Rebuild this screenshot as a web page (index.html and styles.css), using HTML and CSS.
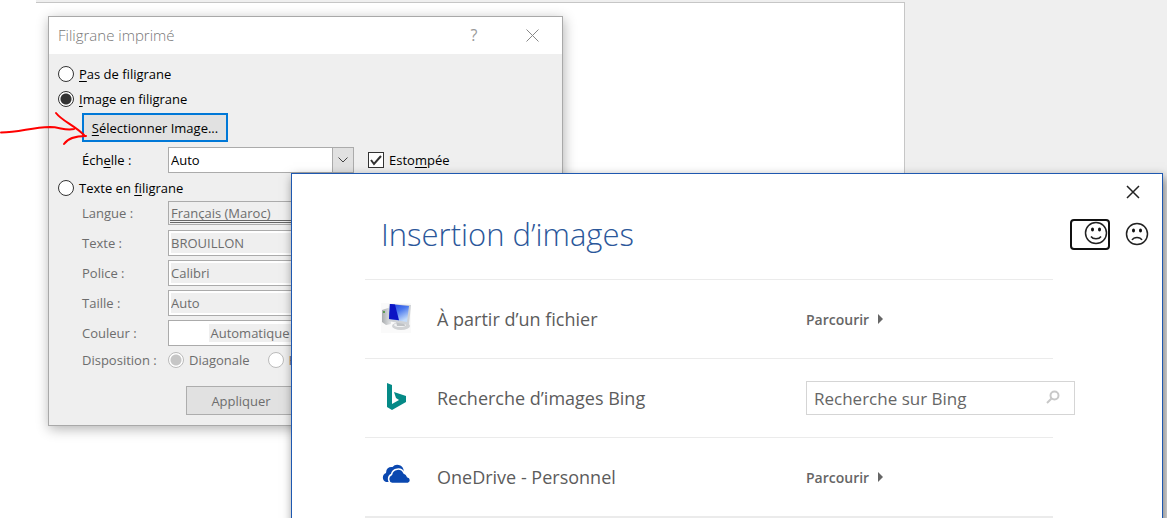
FILE: index.html
```html
<!DOCTYPE html>
<html lang="fr">

<head>
    <meta charset="utf-8">
    <title>Filigrane</title>
    <meta name="viewport" content="width=device-width, initial-scale=1">
    <link rel="stylesheet" href="styles.css">
</head>

<body>
    <div class="desktop">
        <div class="workspace">
            <div class="page"></div>
        </div>

        <div class="window watermark">
            <div class="titlebar">
                <span class="titlebar-text">Filigrane imprimé</span>
                <button type="button" class="titlebar-btn" aria-label="Aide">?</button>
                <button type="button" class="titlebar-btn" aria-label="Fermer">
                    <svg width="13" height="13" viewBox="0 0 13 13"><path d="M.5.5l12 12M12.5.5l-12 12"/></svg>
                </button>
            </div>

            <form class="watermark-form">
                <label class="choice"><input type="radio" name="type"><span><u>P</u>as de filigrane</span></label>
                <label class="choice"><input type="radio" name="type" checked><span><u>I</u>mage en filigrane</span></label>

                <button type="button" class="btn btn-focus"><span><u>S</u>électionner Image...</span></button>

                <div class="field">
                    <label for="scale">Éch<u>e</u>lle :</label>
                    <div class="combo">
                        <select id="scale"><option>Auto</option></select>
                        <svg class="combo-arrow" width="20" height="24" viewBox="0 0 20 24"><path d="M5.500 9.500l4.500 4.500 4.500-4.500"/></svg>
                    </div>
                    <label class="choice"><input type="checkbox" checked><span>Esto<u>m</u>pée</span></label>
                </div>

                <label class="choice choice-text"><input type="radio" name="type"><span>Texte en <u>f</u>iligrane</span></label>

                <fieldset class="text-options" disabled>
                    <div class="field">
                        <label for="lang">Langue :</label>
                        <select id="lang" class="lang"><option>Français (Maroc)</option></select>
                    </div>
                    <div class="field">
                        <label for="text">Texte :</label>
                        <select id="text"><option>BROUILLON</option></select>
                    </div>
                    <div class="field">
                        <label for="police">Police :</label>
                        <select id="police"><option>Calibri</option></select>
                    </div>
                    <div class="field">
                        <label for="size">Taille :</label>
                        <select id="size"><option>Auto</option></select>
                    </div>
                    <div class="field">
                        <label for="color">Couleur :</label>
                        <button type="button" id="color" class="color"><span>Automatique</span></button>
                    </div>
                    <div class="field layout">
                        <span class="field-name">Disposition :</span>
                        <label class="choice"><input type="radio" name="layout" checked><span>Diagonale</span></label>
                        <label class="choice"><input type="radio" name="layout"><span>Horizontale</span></label>
                    </div>
                </fieldset>

                <div class="buttons">
                    <button type="button" class="btn" disabled>Appliquer</button>
                </div>
            </form>
        </div>

        <!-- hand drawn arrow -->
        <svg class="arrow" width="90" height="40" viewBox="0 0 90 40">
            <path d="M1 22.500C20 22.500 30 17.500 50 17C60 17 65 21 74 19M56 3C62 11 74 15 84 25M86 26C78 26 68 28 64 34"/>
        </svg>

        <div class="window insert">
            <div class="insert-top">
                <button type="button" class="close" aria-label="Fermer">
                    <svg width="14" height="14" viewBox="0 0 14 14"><path d="M1 1l12 12M13 1L1 13"/></svg>
                </button>
            </div>

            <div class="insert-head">
                <h1>Insertion d’images</h1>
                <button type="button" class="smiley smiley-focus" aria-label="J’aime">
                    <svg width="24" height="24" viewBox="0 0 24 24">
                        <circle cx="12" cy="12" r="10.500"/>
                        <path d="M7 15.500C9 18.500 15 18.500 17 15.500"/>
                        <ellipse class="eye" cx="8.500" cy="8.500" rx="1.500" ry="2"/>
                        <ellipse class="eye" cx="15.500" cy="8.500" rx="1.500" ry="2"/>
                    </svg>
                </button>
                <button type="button" class="smiley" aria-label="Je n’aime pas">
                    <svg width="24" height="24" viewBox="0 0 24 24">
                        <circle cx="12" cy="12" r="10.500"/>
                        <path d="M7 18C9 14.500 15 14.500 17 18"/>
                        <ellipse class="eye" cx="8.500" cy="8.500" rx="1.500" ry="2"/>
                        <ellipse class="eye" cx="15.500" cy="8.500" rx="1.500" ry="2"/>
                    </svg>
                </button>
            </div>

            <ul class="sources">
                <li class="source">
                    <svg class="icon" width="30" height="30" viewBox="0 0 30 30">
                        <defs>
                            <linearGradient id="screen" x1="0" y1="0" x2="0.600" y2="1">
                                <stop offset="0" stop-color="#1a38e0"/>
                                <stop offset="0.500" stop-color="#4a78ee"/>
                                <stop offset="1" stop-color="#c4dcfa"/>
                            </linearGradient>
                            <linearGradient id="tower" x1="0" y1="0" x2="1" y2="0">
                                <stop offset="0" stop-color="#a9acae"/>
                                <stop offset="1" stop-color="#e4e6e8"/>
                            </linearGradient>
                        </defs>
                        <rect width="30" height="30" fill="#fafafa"/>
                        <path fill="url(#tower)" d="M1 7l6-2 3 1v15l-5 1-4-3z"/>
                        <path fill="#5d9a52" d="M2 8h2v2H2z"/>
                        <ellipse cx="20" cy="23" rx="9" ry="4" fill="#d0d2d4"/>
                        <ellipse cx="19" cy="22" rx="6" ry="2" fill="#f1f2f3"/>
                        <path fill="#bfc2c5" d="M15 18l8 1 1 4h-8z"/>
                        <path fill="#cfd2d6" d="M8 1l22 1-2 20-21-4z"/>
                        <path fill="url(#screen)" d="M9 1l19 2-2 16-18-3z"/>
                        <path fill="#0b14c4" d="M9 1l5 .5 4 15.800-10-1.300z"/>
                    </svg>
                    <span class="source-name">À partir d’un fichier</span>
                    <a href="#" class="browse">Parcourir</a>
                </li>
                <li class="source">
                    <svg class="icon" width="30" height="30" viewBox="0 0 30 30">
                        <path fill="#058a87" d="M6 1l5 2v19l7-4-3-2-2-6 12 4v6l-14 8-5-3z"/>
                    </svg>
                    <label for="bing" class="source-name">Recherche d’images Bing</label>
                    <div class="search">
                        <input type="text" id="bing" placeholder="Recherche sur Bing">
                        <button type="button" aria-label="Rechercher">
                            <svg width="14" height="14" viewBox="0 0 14 14"><circle cx="8.500" cy="5.500" r="4"/><path d="M5.500 8.500L1 13"/></svg>
                        </button>
                    </div>
                </li>
                <li class="source">
                    <svg class="icon" width="30" height="30" viewBox="0 0 30 30">
                        <path fill="#0b48b0" d="M5 21a4.800 4.800 0 0 1 0-9 5.500 5.500 0 0 1 6.500-6 6.500 6.500 0 0 1 11 2.500V14H10v7z"/>
                        <path fill="#0b48b0" stroke="#fff" stroke-width="1.500" d="M11 22.500a4.800 4.800 0 0 1-.5-9 6.600 6.600 0 0 1 12.500-1.500 5 5 0 0 1 3.500 3.700 3.500 3.500 0 0 1 .5 6.800z"/>
                    </svg>
                    <span class="source-name">OneDrive - Personnel</span>
                    <a href="#" class="browse">Parcourir</a>
                </li>
            </ul>
        </div>
    </div>
</body>

</html>
```
FILE: styles.css
```css
* {
    box-sizing: border-box;
}

body {
    margin: 0;
    font-family: "Open Sans", "Noto Sans", sans-serif;
    font-size: 13px;
    color: #000;
}

button,
select,
input {
    font: inherit;
    color: inherit;
}

svg {
    display: block;
    fill: none;
}

u {
    text-underline-offset: 2px;
}

.desktop {
    position: relative;
    min-height: 100vh;
    overflow: hidden;
}

.workspace {
    display: flex;
    height: 100vh;
    margin-left: 36px;
    padding-top: 2px;
    background: #efefef;
}

.page {
    width: 869px;
    background: #fff;
    border: 1px solid #c6c6c6;
    border-width: 1px 1px 0 0;
}

/* windows */
.window {
    position: absolute;
}

.watermark {
    left: 48px;
    top: 16px;
    width: 515px;
    background: #efefef;
    border: 1px solid #a9a9a9;
    box-shadow: 1px 3px 12px rgba(0, 0, 0, 0.3);
}

.titlebar {
    display: flex;
    align-items: center;
    height: 37px;
    padding: 0 1px 1px 9px;
    background: #fff;
    color: #999;
}

.titlebar-text {
    flex: 1;
    font-size: 15px;
    font-weight: 300;
    color: #777;
}

.titlebar-btn {
    display: flex;
    justify-content: center;
    align-items: center;
    width: 58px;
    height: 36px;
    padding: 0;
    border: 0;
    background: none;
    font-size: 16px;
}

.titlebar-btn path {
    stroke: #888;
}

.watermark-form {
    display: flex;
    flex-direction: column;
    align-items: flex-start;
    padding: 7px 10px 10px 9px;
}

.choice {
    display: flex;
    align-items: center;
    gap: 5px;
    height: 25px;
    white-space: nowrap;
}

.choice input {
    appearance: none;
    width: 16px;
    height: 16px;
    margin: 0;
    border: 1px solid #333;
    background: #fff;
}

.choice input[type=radio] {
    border-radius: 50%;
}

.choice input[type=radio]:checked {
    background: radial-gradient(circle, #333 5px, #fff 6px);
}

.choice input[type=radio]:disabled {
    border-color: #bbb;
}

.choice input[type=radio]:checked:disabled {
    background: radial-gradient(circle, #c6c6c6 5px, #fff 6px);
}

.choice input[type=checkbox]:checked {
    background: #fff url("data:image/svg+xml,%3Csvg xmlns='http://www.w3.org/2000/svg' viewBox='0 0 14 14'%3E%3Cpath d='M2 7l3 4 7-8' fill='none' stroke='%23333' stroke-width='2'/%3E%3C/svg%3E");
}

.btn {
    height: 29px;
    padding: 0 12px;
    background: #e1e1e1;
    border: 1px solid #adadad;
}

.btn:disabled {
    width: 110px;
    color: #6d6d6d;
}

.btn-focus {
    width: 146px;
    margin: 2px 0 5px 24px;
    padding: 0;
    border: 2px solid #0078d7;
}

.field {
    display: flex;
    align-items: center;
    height: 26px;
    padding-left: 24px;
}

.field > label:first-child,
.field-name {
    width: 86px;
}

.field select {
    appearance: none;
    width: 186px;
    height: 26px;
    padding: 0 2px;
    border: 1px solid #ababab;
    border-radius: 0;
    background: #fff;
    opacity: 1;
}

.combo {
    position: relative;
    margin-right: 14px;
}

.combo-arrow {
    position: absolute;
    top: 1px;
    right: 1px;
    background: #e1e1e1;
    outline: 1px solid #ababab;
    pointer-events: none;
}

.combo-arrow path {
    stroke: #444;
}

.choice-text {
    margin: 2px 0 0;
}

.text-options {
    display: flex;
    flex-direction: column;
    gap: 4px;
    margin: 0;
    padding: 0;
    border: 0;
    color: #6d6d6d;
}

.text-options select {
    background: #efefef;
    box-shadow: inset 0 0 0 2px #fff;
}

.text-options .lang {
    height: 24px;
    box-shadow: none;
    background: linear-gradient(#666, #666) 1px 18px / 100% 1px no-repeat,
        linear-gradient(#666, #666) 1px 20px / 100% 1px no-repeat, #efefef;
}

.color {
    width: 186px;
    height: 26px;
    padding: 0 22px 0 0;
    border: 1px solid #ababab;
    background: #fff;
}

.color span {
    padding: 0 1px;
    background: #efefef;
}

.layout {
    gap: 18px;
    height: 20px;
}

.layout .field-name {
    margin-right: -18px;
}

.buttons {
    padding: 16px 0 0 128px;
}

.arrow {
    position: absolute;
    left: 0;
    top: 110px;
}

.arrow path {
    stroke: #f00;
    stroke-width: 2;
    stroke-linecap: round;
    stroke-linejoin: round;
}

.insert {
    left: 291px;
    right: 4px;
    top: 173px;
    padding: 0 0 40px 73px;
    background: #fff;
    border: 1px solid #1e58b0;
    box-shadow: 2px 4px 10px rgba(0, 0, 0, 0.5);
    color: #5c5c5c;
}

.insert-top {
    display: flex;
    justify-content: flex-end;
    padding: 11px 22px 0 0;
}

.close {
    padding: 0;
    border: 0;
    background: none;
}

.close path {
    stroke: #222;
    stroke-width: 1.5;
}

.insert-head {
    display: flex;
    align-items: center;
    gap: 15px;
    height: 80px;
    padding: 0 13px 10px 16px;
}

h1 {
    flex: 1;
    margin: 0;
    font-size: 31px;
    font-weight: 300;
    color: #2b579a;
}

.smiley {
    padding: 0;
    border: 0;
    background: none;
}

.smiley svg {
    stroke: #222;
    stroke-width: 1.5;
}

.smiley .eye {
    fill: #111;
    stroke: none;
}

.smiley-focus {
    display: flex;
    justify-content: flex-end;
    width: 40px;
    height: 31px;
    border: 2px solid #111;
    border-radius: 4px;
}

.sources {
    margin: 0 109px 0 0;
    padding: 0;
    list-style: none;
    border-bottom: 2px solid #ebebeb;
}

.source {
    display: grid;
    grid-template-columns: 56px 1fr 247px;
    align-items: center;
    height: 79px;
    padding: 0 0 2px 16px;
    border-top: 1px solid #ebebeb;
}

.source-name {
    padding-top: 2px;
    font-size: 18px;
}

.browse {
    display: flex;
    align-items: center;
    gap: 9px;
    padding-top: 2px;
    font-size: 14px;
    font-weight: 600;
    color: #666;
    text-decoration: none;
}

.browse:after {
    content: "";
    border: 5px solid transparent;
    border-left-color: #666;
    border-right-width: 0;
}

.search {
    display: flex;
    width: 269px;
    height: 34px;
    margin-top: 2px;
    border: 1px solid #d5d5d5;
}

.search input {
    flex: 1;
    min-width: 0;
    padding: 0 7px;
    border: 0;
    outline: 0;
    font-size: 17px;
}

.search input::placeholder {
    color: #666;
}

.search button {
    padding: 0 14px 3px;
    border: 0;
    background: none;
}

.search svg {
    stroke: #c8c8c8;
    stroke-width: 2;
}
```
